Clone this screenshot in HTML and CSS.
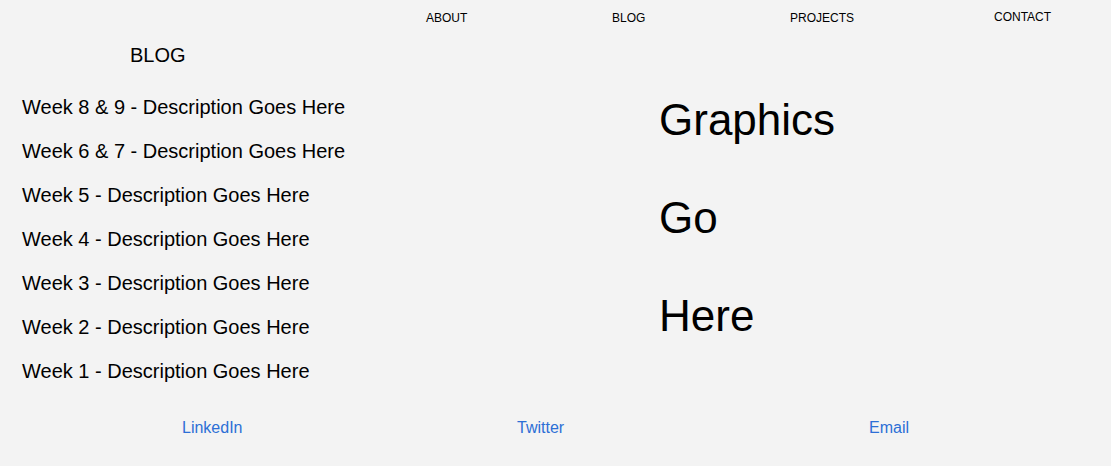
FILE: index.html
```html
<!DOCTYPE html>
<html lang="en">
<head>
<meta charset="utf-8">
<title>Blog</title>
<link rel="stylesheet" href="styles.css">
</head>
<body>
<nav class="nav">
  <a class="nav-link" href="#">ABOUT</a>
  <a class="nav-link" href="#">BLOG</a>
  <a class="nav-link" href="#">PROJECTS</a>
  <a class="nav-link nav-link-up" href="#">CONTACT</a>
</nav>
<main class="main">
  <section class="blog">
    <h2 class="blog-title">BLOG</h2>
    <ul class="posts">
      <li class="post">Week 8 &amp; 9 - Description Goes Here</li>
      <li class="post">Week 6 &amp; 7 - Description Goes Here</li>
      <li class="post">Week 5 - Description Goes Here</li>
      <li class="post">Week 4 - Description Goes Here</li>
      <li class="post">Week 3 - Description Goes Here</li>
      <li class="post">Week 2 - Description Goes Here</li>
      <li class="post">Week 1 - Description Goes Here</li>
    </ul>
  </section>
  <section class="graphics">
    <p class="graphic-line">Graphics</p>
    <p class="graphic-line">Go</p>
    <p class="graphic-line">Here</p>
  </section>
</main>
<footer class="footer">
  <a class="footer-link" href="#">LinkedIn</a>
  <a class="footer-link" href="#">Twitter</a>
  <a class="footer-link" href="#">Email</a>
</footer>
</body>
</html>
```

FILE: styles.css
```css
html, body {
  margin: 0;
  padding: 0;
  background: #f3f3f3;
  color: #000;
  font-family: "Liberation Sans", Arial, sans-serif;
}

.nav {
  display: grid;
  grid-template-columns: 186px 178px 204px auto;
  padding-left: 426px;
  padding-top: 1px;
  height: 34px;
  line-height: 34px;
  font-size: 12px;
}

.nav-link {
  color: #000;
  text-decoration: none;
}

.nav-link-up {
  position: relative;
  top: -1px;
}

.main {
  display: grid;
  grid-template-columns: 637px 1fr;
  padding-left: 22px;
}

.blog-title {
  margin: 8px 0 0 108px;
  font-size: 20px;
  font-weight: normal;
  line-height: 24px;
}

.posts {
  list-style: none;
  margin: 18px 0 0;
  padding: 0;
}

.post {
  font-size: 20px;
  line-height: 44px;
}

.graphics {
  padding-top: 36px;
}

.graphic-line {
  margin: 0;
  font-size: 44px;
  line-height: 98px;
}

.footer {
  display: grid;
  grid-template-columns: 335px 352px auto;
  padding-left: 182px;
  margin-top: 25px;
  line-height: 20px;
  font-size: 16px;
}

.footer-link {
  color: #2c6fd6;
  text-decoration: none;
}
```
